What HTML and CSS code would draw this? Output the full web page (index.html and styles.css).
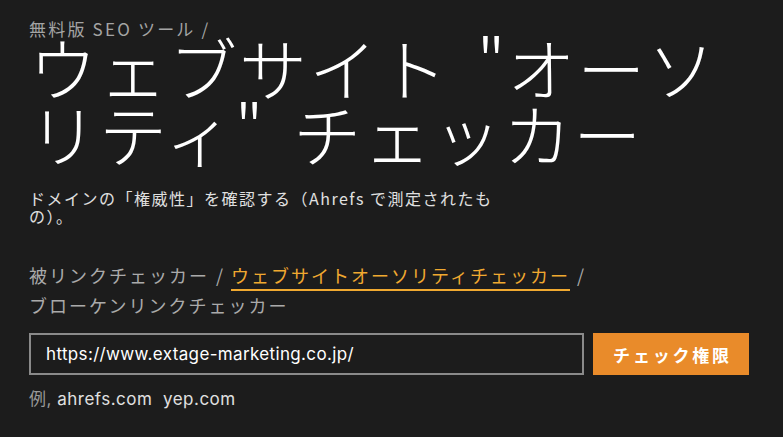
FILE: index.html
```html
<!DOCTYPE html>
<html lang="ja">
<head>
<meta charset="utf-8">
<link rel="stylesheet" href="styles.css">
</head>
<body>
<main class="page">
  <div class="crumb">無料版 SEO ツール /</div>
  <h1 class="title">ウェブサイト "オーソリティ" チェッカー</h1>
  <p class="desc">ドメインの「権威性」を確認する（Ahrefs で測定されたもの）。</p>
  <nav class="tools">
    <span class="item"><a class="tool">被リンクチェッカー</a><span class="sep">/</span></span>
    <span class="item"><a class="tool active">ウェブサイトオーソリティチェッカー</a><span class="sep">/</span></span>
    <span class="item"><a class="tool">ブローケンリンクチェッカー</a></span>
  </nav>
  <form class="check">
    <div class="field">https://www.extage-marketing.co.jp/</div>
    <button class="btn" type="button">チェック権限</button>
  </form>
  <div class="examples"><span class="ex-label">例,</span> ahrefs.com&nbsp; yep.com</div>
</main>
</body>
</html>
```

FILE: styles.css
```css
html, body {
  margin: 0;
  padding: 0;
  background: #1c1c1c;
}
body {
  font-family: "Noto Sans CJK JP", "Inter", sans-serif;
  color: #e8e8e8;
}
.page {
  padding: 16px 29px 0 29px;
}
.crumb {
  font-size: 17px;
  line-height: 26px;
  letter-spacing: 2.2px;
  color: #a4a4a4;
}
.title {
  margin: -8px 0 0 0;
  font-size: 68px;
  line-height: 66px;
  font-weight: 300;
  letter-spacing: 2px;
  word-spacing: 11px;
  color: #ffffff;
  width: 724px;
}
.desc {
  margin: 23px 0 0 0;
  width: 490px;
  font-size: 16px;
  line-height: 18px;
  letter-spacing: 1.5px;
  color: #e0e0e0;
}
.tools {
  margin-top: 35px;
  width: 620px;
  display: flex;
  flex-wrap: wrap;
  font-size: 18px;
  line-height: 30px;
  color: #aaaaaa;
}
.item {
  white-space: nowrap;
}
.tool {
  color: #aaaaaa;
  letter-spacing: 2px;
}
.tool.active {
  color: #f0a930;
  border-bottom: 2px solid #f0a930;
  padding-bottom: 1px;
}
.sep {
  margin: 0 8px 0 7px;
}
.check {
  display: flex;
  gap: 9px;
  margin-top: 13px;
  width: 719px;
}
.field {
  flex: 0 0 555px;
  box-sizing: border-box;
  height: 42px;
  border: 2px solid #8a8a8a;
  padding: 0 15px;
  font-family: "Inter", "Noto Sans", sans-serif;
  font-size: 17px;
  letter-spacing: 0.35px;
  line-height: 38px;
  color: #ffffff;
}
.btn {
  flex: 0 0 156px;
  height: 42px;
  border: 0;
  background: #e98b2a;
  color: #ffffff;
  font-family: "Noto Sans CJK JP", sans-serif;
  font-weight: 700;
  font-size: 17px;
  letter-spacing: 2.8px;
  padding: 0 0 0 3px;
}
.examples {
  margin-top: 13px;
  font-family: "Inter", "Noto Sans CJK JP", sans-serif;
  font-size: 17px;
  letter-spacing: 0.5px;
  line-height: 22px;
  color: #e0e0e0;
}
.ex-label {
  color: #9a9a9a;
}
```
